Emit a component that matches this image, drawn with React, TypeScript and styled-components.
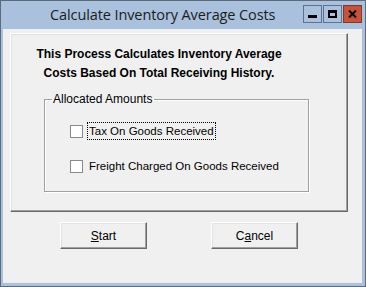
import React from "react"
import styled, {createGlobalStyle} from "styled-components"

const Global = createGlobalStyle`
  html, body {
    margin: 0;
    padding: 0;
    background: #f0f0f0;
  }
`;

const Window = styled.div`
  width: 366px;
  height: 287px;
  box-sizing: border-box;
  border: 1px solid #5b6b7c;
  background: #a9c1dd;
  display: flex;
  flex-direction: column;
  padding: 0 3px 3px 2px;
  font-family: "Liberation Sans", Arial, sans-serif;
`;

const TitleBar = styled.div`
  height: 28px;
  display: flex;
  align-items: flex-start;
  box-sizing: border-box;
`;

const TitleText = styled.div`
  flex: 1;
  padding: 5px 0 0 47px;
  font-family: "Open Sans", "Noto Sans", sans-serif;
  font-size: 14.5px;
  color: #1c1c1c;
  line-height: 18px;
  letter-spacing: -0.1px;
`;

const Controls = styled.div`
  display: flex;
  gap: 1px;
  padding-top: 4px;
`;

const CtrlButton = styled.div<{ $close?: boolean }>`
  width: 19px;
  height: 18px;
  box-sizing: border-box;
  border: 1px solid ${p => p.$close ? "#7a3a30" : "#5d7190"};
  background: ${p => p.$close ? "#c8513c" : "#a9c1dd"};
  display: flex;
  align-items: center;
  justify-content: center;
`;

const Client = styled.div`
  flex: 1;
  background: #f0f0f0;
  padding: 4px 0 0 7px;
  display: flex;
  flex-direction: column;
`;

const Panel = styled.div`
  width: 338px;
  height: 179px;
  box-sizing: border-box;
  border-top: 1px solid #ffffff;
  border-left: 1px solid #ffffff;
  border-right: 1px solid #696969;
  border-bottom: 1px solid #696969;
  box-shadow: inset -1px -1px 0 #a0a0a0, inset 1px 1px 0 #e3e3e3;
  padding: 11px 0 0 0;
`;

const Heading = styled.div`
  width: 296px;
  text-align: center;
  font-weight: bold;
  font-size: 12px;
  line-height: 19px;
  color: #000;
`;

const Group = styled.fieldset`
  margin: 9px 0 0 33px;
  width: 265px;
  height: 100px;
  box-sizing: border-box;
  border: 1px solid #a0a0a0;
  box-shadow: 1px 1px 0 #fff, inset 1px 1px 0 #fff;
  padding: 0 0 0 25px;
  display: flex;
  flex-direction: column;
  gap: 17px;
`;

const Legend = styled.legend`
  margin-left: -18px;
  padding: 0 2px 0 1px;
  font-size: 12px;
  color: #000;
  font-family: "Liberation Sans", Arial, sans-serif;
`;

const CheckRow = styled.label`
  display: flex;
  align-items: center;
  gap: 4px;
  font-size: 11.5px;
  color: #000;
  height: 18px;
`;

const FirstRow = styled(CheckRow)`
  margin-top: 16px;
`;

const Box = styled.span`
  width: 13px;
  height: 13px;
  box-sizing: border-box;
  border: 1px solid #8a8a8a;
  background: #fff;
  flex: none;
`;

const Caption = styled.span<{ $focus?: boolean }>`
  padding: 1px 1px;
  border: 1px dotted ${p => p.$focus ? "#000" : "transparent"};
  line-height: 14px;
`;

const ButtonRow = styled.div`
  display: flex;
  gap: 64px;
  padding: 10px 0 0 50px;
`;

const Button = styled.div`
  width: 87px;
  height: 27px;
  box-sizing: border-box;
  border-top: 1px solid #fff;
  border-left: 1px solid #fff;
  border-right: 1px solid #696969;
  border-bottom: 1px solid #696969;
  box-shadow: inset -1px -1px 0 #a0a0a0, inset 1px 1px 0 #e3e3e3;
  background: #f0f0f0;
  display: flex;
  align-items: center;
  justify-content: center;
  font-size: 12px;
  color: #000;
`;

const U = styled.span`
  text-decoration: underline;
`;

export default function App() {
    return (
        <>
            <Global/>
            <Window>
                <TitleBar>
                    <TitleText>Calculate Inventory Average Costs</TitleText>
                    <Controls>
                        <CtrlButton>
                            <svg width="9" height="9" viewBox="0 0 9 9"><rect x="0" y="5" width="9" height="3" fill="#000"/></svg>
                        </CtrlButton>
                        <CtrlButton>
                            <svg width="9" height="8" viewBox="0 0 9 8"><path d="M0 0h9v8H0z M2 3v3h5V3z" fill="#000" fillRule="evenodd"/></svg>
                        </CtrlButton>
                        <CtrlButton $close>
                            <svg width="9" height="8" viewBox="0 0 9 8"><path d="M1 0.5 L8 7.5 M8 0.5 L1 7.5" stroke="#000" strokeWidth="2"/></svg>
                        </CtrlButton>
                    </Controls>
                </TitleBar>
                <Client>
                    <Panel>
                        <Heading>
                            This Process Calculates Inventory Average<br/>
                            Costs Based On Total Receiving History.
                        </Heading>
                        <Group>
                            <Legend>Allocated Amounts</Legend>
                            <FirstRow><Box/><Caption $focus>Tax On Goods Received</Caption></FirstRow>
                            <CheckRow><Box/><Caption>Freight Charged On Goods Received</Caption></CheckRow>
                        </Group>
                    </Panel>
                    <ButtonRow>
                        <Button><span><U>S</U>tart</span></Button>
                        <Button><span>C<U>a</U>ncel</span></Button>
                    </ButtonRow>
                </Client>
            </Window>
        </>
    )
}
